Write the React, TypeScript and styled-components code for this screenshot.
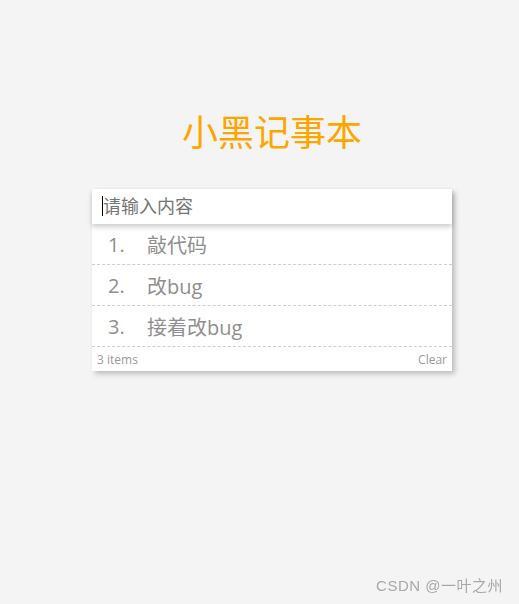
import React from "react";
import styled, { createGlobalStyle } from "styled-components";

const Global = createGlobalStyle`
  html, body {
    margin: 0;
    padding: 0;
    background: #f4f4f4;
    font-family: "Noto Sans", "Noto Sans CJK SC", sans-serif;
  }
`;

const Page = styled.div`
  min-height: 604px;
  display: flex;
  flex-direction: column;
  align-items: center;
  padding-left: 25px;
  box-sizing: border-box;
`;

const Title = styled.h1`
  margin: 107px 0 0 0;
  height: 82px;
  font-family: "Noto Sans CJK SC", sans-serif;
  font-weight: 400;
  font-size: 36px;
  line-height: 46px;
  color: #ffa500;
`;

const Card = styled.section`
  width: 360px;
  background: #fff;
  box-shadow: 3px 3px 5px rgba(0, 0, 0, 0.22);
  display: flex;
  flex-direction: column;
`;

const Field = styled.div`
  position: relative;
  z-index: 1;
  display: flex;
  box-shadow: 0 3px 5px rgba(0, 0, 0, 0.2);
`;

const Caret = styled.span`
  position: absolute;
  left: 10px;
  top: 7px;
  width: 1px;
  height: 20px;
  background: #000;
`;

const Input = styled.input`
  flex: 1;
  height: 35px;
  box-sizing: border-box;
  border: none;
  outline: none;
  padding: 0 0 3px 11px;
  font-family: "Noto Sans CJK SC", sans-serif;
  font-size: 18px;
  color: #444;
  background: #fff;
  &::placeholder {
    color: #767676;
  }
`;

const List = styled.ul`
  list-style: none;
  margin: 0;
  padding: 0;
`;

const Item = styled.li`
  height: 40px;
  display: flex;
  align-items: center;
  padding-left: 16px;
  border-bottom: 1px dashed #cfcfcf;
  font-family: "Open Sans", "Noto Sans CJK SC", sans-serif;
  font-size: 20px;
  color: #8f8f8f;
`;

const Index = styled.span`
  width: 39px;
`;

const Footer = styled.footer`
  height: 24px;
  display: flex;
  align-items: center;
  justify-content: space-between;
  padding: 0 5px;
  font-family: "Open Sans", sans-serif;
  font-size: 12px;
  color: #9a9a9a;
`;

const Watermark = styled.div`
  position: fixed;
  right: 16px;
  bottom: 9px;
  font-family: "Liberation Sans", "Noto Sans CJK SC", sans-serif;
  font-size: 15px;
  letter-spacing: 0.5px;
  color: #a8a8a8;
`;

const todos = ["敲代码", "改bug", "接着改bug"];

export default function App() {
  return (
    <>
      <Global />
      <Page>
        <Title>小黑记事本</Title>
        <Card>
          <Field>
            <Input placeholder="请输入内容" />
            <Caret />
          </Field>
          <List>
            {todos.map((t, i) => (
              <Item key={i}>
                <Index>{i + 1}.</Index>
                <span>{t}</span>
              </Item>
            ))}
          </List>
          <Footer>
            <span>{todos.length} items</span>
            <span>Clear</span>
          </Footer>
        </Card>
      </Page>
      <Watermark>CSDN @一叶之州</Watermark>
    </>
  );
}
